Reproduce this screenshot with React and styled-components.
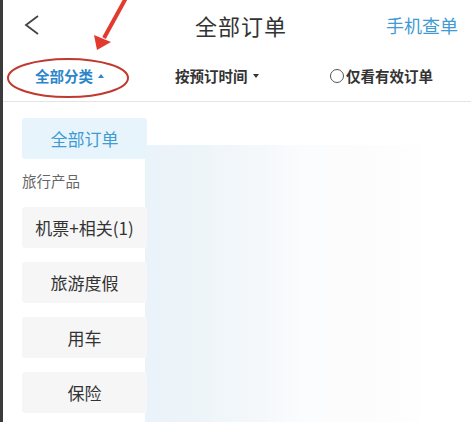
import React from "react";
import styled, { createGlobalStyle } from "styled-components";

const GlobalStyle = createGlobalStyle`
  html, body {
    margin: 0;
    padding: 0;
    background: #ffffff;
  }
  body {
    font-family: "Noto Sans CJK SC", "Noto Sans", "Liberation Sans", sans-serif;
  }
`;

const Frame = styled.div`
  display: flex;
  width: 471px;
  height: 422px;
  overflow: hidden;
  position: relative;
`;

const EdgeStrip = styled.div`
  width: 3px;
  flex-shrink: 0;
  background: #3b3b3b;
`;

const Screen = styled.div`
  flex: 1;
  display: flex;
  flex-direction: column;
  background: #fff;
`;

const Header = styled.header`
  height: 50px;
  display: grid;
  grid-template-columns: 1fr auto 1fr;
  align-items: center;
  padding: 0 13px 0 21px;
`;

const BackButton = styled.div`
  display: flex;
  align-items: center;
  height: 20px;
`;

const Title = styled.h1`
  margin: 0;
  font-size: 22px;
  font-weight: 400;
  letter-spacing: 1px;
  color: #333;
`;

const HeaderLink = styled.span`
  justify-self: end;
  font-size: 18px;
  color: #3f9bd3;
`;

const FilterBar = styled.div`
  height: 51px;
  display: grid;
  grid-template-columns: 140px 155px 1fr;
  align-items: center;
  padding-left: 32px;
  border-bottom: 1px solid #e4e4e4;
`;

const Filter = styled.span`
  display: flex;
  align-items: center;
  font-size: 14.5px;
  font-weight: 700;
  color: ${({ $active }) => ($active ? "#2b86cc" : "#333")};
`;

const Caret = styled.span`
  width: 0;
  height: 0;
  margin-left: 5px;
  border-left: 3.5px solid transparent;
  border-right: 3.5px solid transparent;
  ${({ $up, $color }) =>
    $up
      ? `border-bottom: 4px solid ${$color};`
      : `border-top: 4px solid ${$color};`}
`;

const Radio = styled.span`
  width: 12px;
  height: 12px;
  margin-right: 2px;
  border: 1px solid #555;
  border-radius: 50%;
`;

const Body = styled.div`
  flex: 1;
  display: flex;
  padding: 16px 0 0 19px;
`;

const Sidebar = styled.nav`
  width: 125px;
  display: flex;
  flex-direction: column;
  position: relative;
  z-index: 1;
`;

const SideItem = styled.div`
  height: 41px;
  display: flex;
  align-items: center;
  justify-content: center;
  border-radius: 3px;
  font-size: 17px;
  white-space: nowrap;
  background: ${({ $active }) => ($active ? "#e8f4fb" : "#f6f6f6")};
  color: ${({ $active }) => ($active ? "#3f9bd3" : "#333")};
  & + & {
    margin-top: 14px;
  }
`;

const SideLabel = styled.div`
  line-height: 44px;
  margin-bottom: 4px;
  font-size: 14.5px;
  color: #666;
`;

const Panel = styled.div`
  width: 275px;
  margin: 27px 0 0 -2px;
  background: linear-gradient(
    to right,
    #eaf3fa 0%,
    #eef5f9 22%,
    #f5f8fb 42%,
    #fafcfd 58%,
    #fdfcfd 75%,
    #fefefe 100%
  );
`;

const Annotation = styled.svg`
  position: absolute;
  left: 0;
  top: 0;
  pointer-events: none;
`;

const categories = ["机票+相关(1)", "旅游度假", "用车", "保险"];

export default function App() {
  return (
    <>
      <GlobalStyle />
      <Frame>
        <EdgeStrip />
        <Screen>
          <Header>
            <BackButton>
              <svg width="16" height="20" viewBox="0 0 16 20">
                <polyline
                  points="14,1 2,10 14,19"
                  fill="none"
                  stroke="#444"
                  strokeWidth="1.8"
                />
              </svg>
            </BackButton>
            <Title>全部订单</Title>
            <HeaderLink>手机查单</HeaderLink>
          </Header>
          <FilterBar>
            <Filter $active>
              全部分类
              <Caret $up $color="#2b86cc" />
            </Filter>
            <Filter>
              按预订时间
              <Caret $color="#333" />
            </Filter>
            <Filter>
              <Radio />
              仅看有效订单
            </Filter>
          </FilterBar>
          <Body>
            <Sidebar>
              <SideItem $active>全部订单</SideItem>
              <SideLabel>旅行产品</SideLabel>
              {categories.map((c) => (
                <SideItem key={c}>{c}</SideItem>
              ))}
            </Sidebar>
            <Panel />
          </Body>
        </Screen>
        <Annotation width="160" height="105" viewBox="0 0 160 105">
          <ellipse
            cx="68"
            cy="78"
            rx="60"
            ry="19"
            fill="none"
            stroke="#c0392f"
            strokeWidth="2"
          />
          <line
            x1="126"
            y1="-2"
            x2="104"
            y2="38"
            stroke="#e23a2e"
            strokeWidth="4"
          />
          <polygon points="97,50 94,35 111,42" fill="#e23a2e" />
        </Annotation>
      </Frame>
    </>
  );
}
